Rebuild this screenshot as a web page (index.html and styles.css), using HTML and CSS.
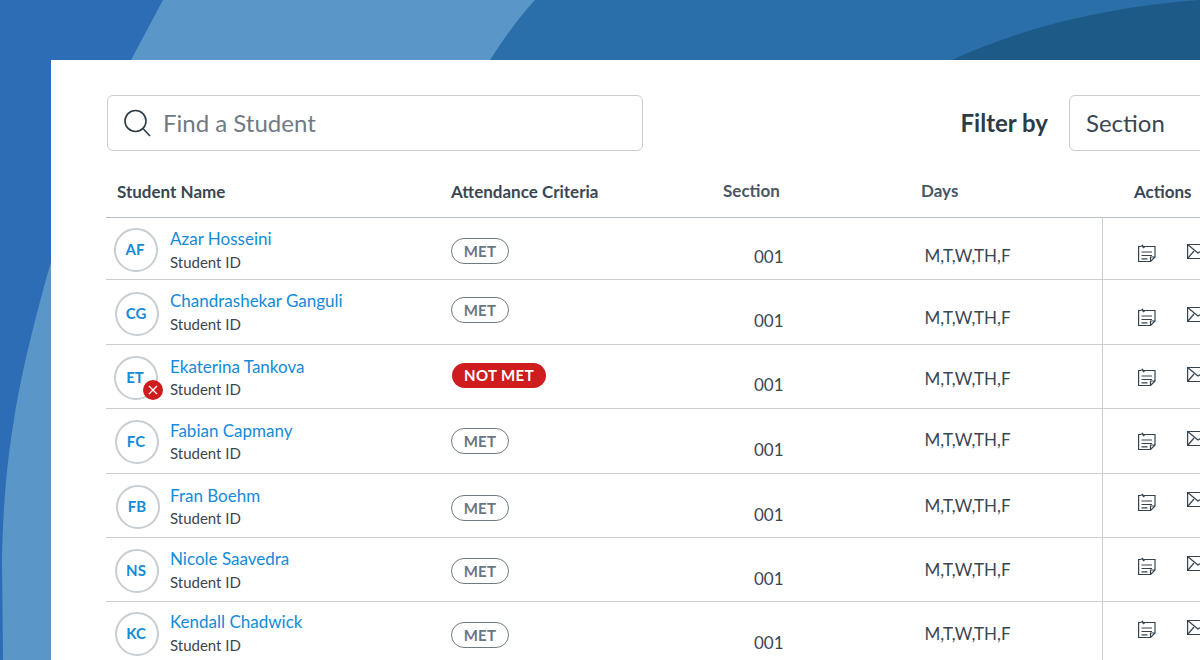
FILE: index.html
```html
<!DOCTYPE html>
<html lang="en">
<head>
<meta charset="utf-8">
<title>Attendance</title>
<link rel="stylesheet" href="styles.css">
</head>
<body>
<div class="page">
  <svg class="backdrop" width="1200" height="660" viewBox="0 0 1200 660" aria-hidden="true">
    <rect class="bg-base" width="1200" height="660"/>
    <path class="bg-mid" d="M520 0 H1200 V60 H480 Z"/>
    <path class="bg-light" d="M163 0 L131 60 C100 125 70 195 51 262 C40 300 24 360 15 413 C8 455 3 500 2 560 L3 660 H60 V60 H490 C503 40 518 18 535 0 Z"/>
    <path class="bg-dark" d="M952 60 C1020 28 1110 6 1200 0 V60 Z"/>
  </svg>
  <main class="card">
    <div class="toolbar">
      <label class="search">
        <svg class="search-icon" width="28" height="28" viewBox="0 0 28 28" aria-hidden="true"><circle cx="12.5" cy="12" r="10.5"/><path d="M20 19.5 L27 27"/></svg>
        <span>Find a Student</span>
      </label>
      <span class="filter-label">Filter by</span>
      <div class="select">Section</div>
    </div>
    <div class="head">
      <div class="th-name">Student Name</div>
      <div class="th-crit">Attendance Criteria</div>
      <div class="th-sec">Section</div>
      <div class="th-days">Days</div>
      <div class="th-act">Actions</div>
    </div>

    <div class="row r1">
      <div class="student"><div class="avatar">AF</div><div class="who"><a class="name">Azar Hosseini</a><div class="sid">Student ID</div></div></div>
      <div class="crit"><span class="badge">MET</span></div>
      <div class="sec">001</div><div class="days">M,T,W,TH,F</div>
      <div class="actions"><svg class="note" viewBox="0 0 18 18"><use href="#i-note"/></svg><svg class="mail" viewBox="0 0 18 18"><use href="#i-mail"/></svg></div>
    </div>
    <div class="row r2">
      <div class="student"><div class="avatar">CG</div><div class="who"><a class="name">Chandrashekar Ganguli</a><div class="sid">Student ID</div></div></div>
      <div class="crit"><span class="badge">MET</span></div>
      <div class="sec">001</div><div class="days">M,T,W,TH,F</div>
      <div class="actions"><svg class="note" viewBox="0 0 18 18"><use href="#i-note"/></svg><svg class="mail" viewBox="0 0 18 18"><use href="#i-mail"/></svg></div>
    </div>
    <div class="row r3">
      <div class="student"><div class="avatar">ET<span class="alert"><svg width="10" height="10" viewBox="0 0 10 10"><path d="M1 1 L9 9 M9 1 L1 9"/></svg></span></div><div class="who"><a class="name">Ekaterina Tankova</a><div class="sid">Student ID</div></div></div>
      <div class="crit"><span class="badge bad">NOT MET</span></div>
      <div class="sec">001</div><div class="days">M,T,W,TH,F</div>
      <div class="actions"><svg class="note" viewBox="0 0 18 18"><use href="#i-note"/></svg><svg class="mail" viewBox="0 0 18 18"><use href="#i-mail"/></svg></div>
    </div>
    <div class="row r4">
      <div class="student"><div class="avatar">FC</div><div class="who"><a class="name">Fabian Capmany</a><div class="sid">Student ID</div></div></div>
      <div class="crit"><span class="badge">MET</span></div>
      <div class="sec">001</div><div class="days">M,T,W,TH,F</div>
      <div class="actions"><svg class="note" viewBox="0 0 18 18"><use href="#i-note"/></svg><svg class="mail" viewBox="0 0 18 18"><use href="#i-mail"/></svg></div>
    </div>
    <div class="row r5">
      <div class="student"><div class="avatar">FB</div><div class="who"><a class="name">Fran Boehm</a><div class="sid">Student ID</div></div></div>
      <div class="crit"><span class="badge">MET</span></div>
      <div class="sec">001</div><div class="days">M,T,W,TH,F</div>
      <div class="actions"><svg class="note" viewBox="0 0 18 18"><use href="#i-note"/></svg><svg class="mail" viewBox="0 0 18 18"><use href="#i-mail"/></svg></div>
    </div>
    <div class="row r6">
      <div class="student"><div class="avatar">NS</div><div class="who"><a class="name">Nicole Saavedra</a><div class="sid">Student ID</div></div></div>
      <div class="crit"><span class="badge">MET</span></div>
      <div class="sec">001</div><div class="days">M,T,W,TH,F</div>
      <div class="actions"><svg class="note" viewBox="0 0 18 18"><use href="#i-note"/></svg><svg class="mail" viewBox="0 0 18 18"><use href="#i-mail"/></svg></div>
    </div>
    <div class="row r7">
      <div class="student"><div class="avatar">KC</div><div class="who"><a class="name">Kendall Chadwick</a><div class="sid">Student ID</div></div></div>
      <div class="crit"><span class="badge">MET</span></div>
      <div class="sec">001</div><div class="days">M,T,W,TH,F</div>
      <div class="actions"><svg class="note" viewBox="0 0 18 18"><use href="#i-note"/></svg><svg class="mail" viewBox="0 0 18 18"><use href="#i-mail"/></svg></div>
    </div>
  </main>
  <svg class="defs" width="0" height="0" aria-hidden="true">
    <symbol id="i-note" viewBox="0 0 18 18">
      <path d="M3.5 2.5 H0.6 V17.5 H12.5 L17 13 V2.5 H6"/>
      <path d="M12.5 17.5 V13 H17"/>
      <path d="M3.5 8 H14 M3.5 11.5 H14 M3.5 14.8 H9.5"/>
      <path d="M3.8 1 L6.2 4" class="pin"/>
    </symbol>
    <symbol id="i-mail" viewBox="0 0 18 18">
      <path d="M0.6 1.5 H24 V15.5 H0.6 Z"/>
      <path d="M0.6 1.5 L11 10 L24 1.5 M0.6 15.5 L7 8"/>
    </symbol>
  </svg>
</div>
</body>
</html>
```
FILE: styles.css
```css
* { box-sizing: border-box; }
html, body { margin: 0; padding: 0; }
body { font-family: Lato, "Open Sans", sans-serif; color: #2d3b45; background: #2d6db5; }

.page { position: relative; width: 1200px; height: 660px; overflow: hidden; padding: 60px 0 0 51px; }
.backdrop { position: absolute; left: 0; top: 0; }
.bg-base { fill: #2d6db5; }
.bg-mid { fill: #2a6fa9; }
.bg-light { fill: #5b96c9; }
.bg-dark { fill: #1e5a88; }
.defs { position: absolute; }

.card { position: relative; width: 1260px; height: 640px; background: #fff; padding: 35px 0 0 55px; }

.toolbar { display: flex; align-items: center; width: 1123px; height: 56px; }
.search { display: flex; align-items: center; width: 536px; height: 56px; margin-left: 1px; margin-right: auto; padding: 0 0 1px 15px; border: 1.5px solid #c7cdd1; border-radius: 6px; font-size: 24px; color: #6f7b84; }
.search span { margin-bottom: 1px; }
.search-icon { flex: none; margin-right: 12px; fill: none; stroke: #2d3b45; stroke-width: 1.6; }
.filter-label { font-size: 24px; font-weight: 700; margin: 0 21px 1px 0; }
.select { width: 160px; height: 56px; display: flex; align-items: center; padding: 0 0 2px 16px; border: 1.5px solid #c7cdd1; border-radius: 6px; font-size: 24px; color: #3a4752; }

.head { display: grid; grid-template-columns: 345px 272px 198px 213px 1fr; height: 67px; border-bottom: 1px solid #b9c0c5; font-size: 17px; color: #3a4752; font-weight: 700; }
.head > div { padding-top: 31px; line-height: 20px; }
.th-name { padding-left: 11px; }
.th-sec, .th-days { color: #4a5761; padding-top: 30px !important; }

.row { display: grid; grid-template-columns: 345px 272px 198px 181px 1fr; height: var(--h); border-bottom: 1px solid #c9ced2; font-size: 17px; color: #3a4752; }
.r1 { --h: 62px; --ax: 8px; --ay: 10px; --ny: 11px; --ig: 3px; --by: 20px; --sy: 29px; --dy: 28px; --iy: 26px; --my: -1px; }
.r2 { --h: 65px; --ax: 9px; --ay: 12px; --ny: 11px; --ig: 3px; --by: 17px; --sy: 31px; --dy: 28px; --iy: 28px; --my: -2px; }
.r3 { --h: 64px; --ax: 8px; --ay: 11px; --ny: 12px; --ig: 2px; --by: 18px; --sy: 30px; --dy: 24px; --iy: 23px; --my: -2px; }
.r4 { --h: 65px; --ax: 9px; --ay: 11px; --ny: 12px; --ig: 2px; --by: 19px; --sy: 31px; --dy: 21px; --iy: 23px; --my: -2px; }
.r5 { --h: 64px; --ax: 10px; --ay: 11px; --ny: 12px; --ig: 2px; --by: 21px; --sy: 31px; --dy: 22px; --iy: 19px; --my: -2px; }
.r6 { --h: 64px; --ax: 9px; --ay: 11px; --ny: 11px; --ig: 3px; --by: 20px; --sy: 31px; --dy: 22px; --iy: 19px; --my: -2px; }
.r7 { --h: 64px; --ax: 9px; --ay: 10px; --ny: 10px; --ig: 3px; --by: 20px; --sy: 31px; --dy: 22px; --iy: 18px; --my: -1px; }

.student { display: flex; align-items: flex-start; }
.avatar { position: relative; flex: none; width: 44px; height: 44px; margin-top: var(--ay); margin-left: var(--ax); margin-right: calc(20px - var(--ax)); padding: 0 2px 2px 0; border: 2px solid #c7cdd1; border-radius: 50%; display: flex; align-items: center; justify-content: center; font-size: 15px; font-weight: 700; color: #138bd6; }
.alert { position: absolute; right: -7px; bottom: -2px; width: 20px; height: 20px; border-radius: 50%; background: #cf1c1f; display: flex; align-items: center; justify-content: center; }
.alert path { stroke: #fff; stroke-width: 1.3; fill: none; }
.who { padding-top: var(--ny); margin-left: -8px; padding-left: 8px; }
.name { display: block; line-height: 20px; font-size: 17px; color: #138bd6; }
.sid { line-height: 20px; margin-top: var(--ig); font-size: 15px; color: #3a4752; }

.crit { padding-top: var(--by); }
.badge { display: inline-flex; align-items: center; justify-content: center; height: 26px; width: 58px; padding-bottom: 1px; border: 1px solid #6f7b84; border-radius: 13px; font-size: 15px; font-weight: 700; color: #6b7780; letter-spacing: 0.3px; background: #fff; }
.badge.bad { width: 94px; height: 25px; margin-left: 1px; border: 0; background: #cf1c1f; color: #fff; letter-spacing: 0.4px; }

.sec { padding-top: var(--sy); padding-left: 31px; line-height: 20px; }
.days { padding-top: var(--dy); padding-left: 3.5px; line-height: 20px; }
.actions { border-left: 1px solid #c9ced2; padding: var(--iy) 0 0 35px; display: flex; align-items: flex-start; gap: 31px; }
.note, .mail { flex: none; width: 18px; height: 18px; fill: none; stroke: #36434e; stroke-width: 1.2; overflow: visible; }
.mail { margin-top: var(--my); }
.pin { stroke-width: 1.8; }
```
